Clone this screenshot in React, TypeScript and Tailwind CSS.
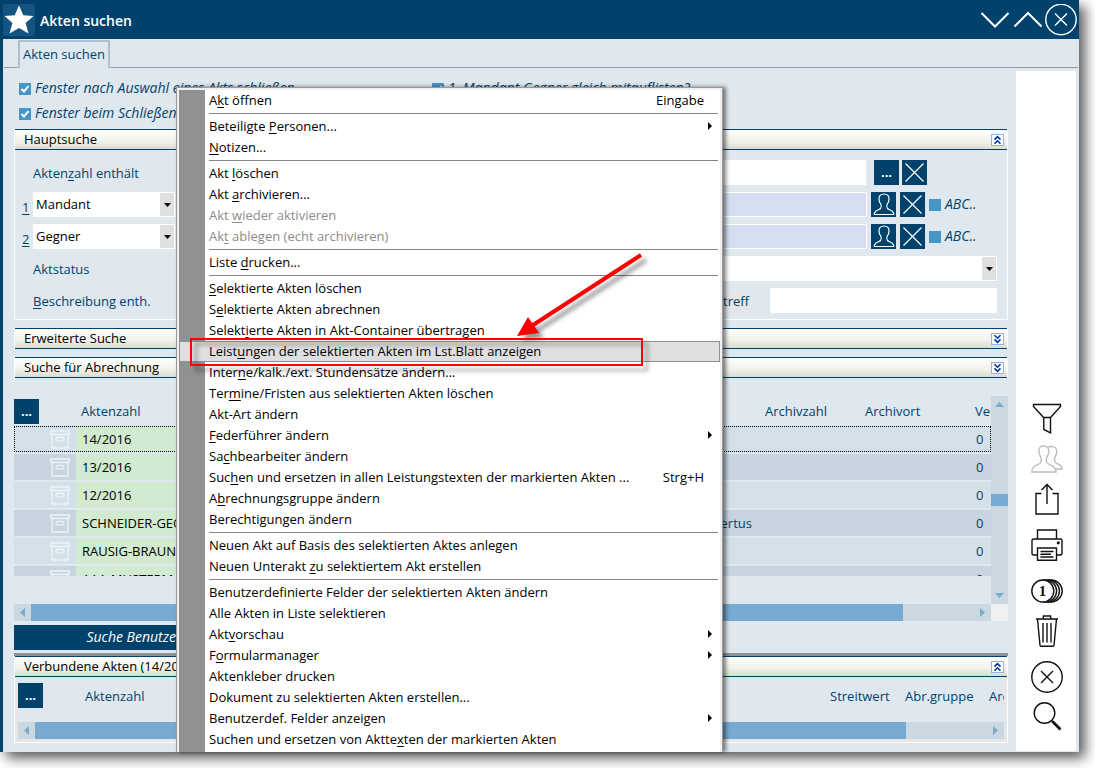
import { clsx } from "clsx";
import type { ReactNode } from "react";

type MenuEntry =
  | "-"
  | {
      label: string;
      /** index of the underlined access key */
      key?: number;
      shortcut?: string;
      sub?: boolean;
      disabled?: boolean;
      active?: boolean;
    };

const MENU: MenuEntry[] = [
  { label: "Akt öffnen", key: 1, shortcut: "Eingabe" },
  "-",
  { label: "Beteiligte Personen...", key: 11, sub: true },
  { label: "Notizen...", key: 0 },
  "-",
  { label: "Akt löschen", key: 4 },
  { label: "Akt archivieren...", key: 4 },
  { label: "Akt wieder aktivieren", key: 4, disabled: true },
  { label: "Akt ablegen (echt archivieren)", key: 2, disabled: true },
  "-",
  { label: "Liste drucken...", key: 6 },
  "-",
  { label: "Selektierte Akten löschen", key: 0 },
  { label: "Selektierte Akten abrechnen", key: 1 },
  { label: "Selektierte Akten in Akt-Container übertragen", key: 6 },
  {
    label: "Leistungen der selektierten Akten im Lst.Blatt anzeigen",
    key: 5,
    active: true,
  },
  { label: "Interne/kalk./ext. Stundensätze ändern...", key: 5 },
  { label: "Termine/Fristen aus selektierten Akten löschen", key: 3 },
  { label: "Akt-Art ändern" },
  { label: "Federführer ändern", key: 0, sub: true },
  { label: "Sachbearbeiter ändern", key: 2 },
  {
    label: "Suchen und ersetzen in allen Leistungstexten der markierten Akten ...",
    key: 3,
    shortcut: "Strg+H",
  },
  { label: "Abrechnungsgruppe ändern", key: 1 },
  { label: "Berechtigungen ändern", key: 8 },
  "-",
  { label: "Neuen Akt auf Basis des selektierten Aktes anlegen" },
  { label: "Neuen Unterakt zu selektiertem Akt erstellen", key: 15 },
  "-",
  { label: "Benutzerdefinierte Felder der selektierten Akten ändern" },
  { label: "Alle Akten in Liste selektieren" },
  { label: "Aktvorschau", key: 3, sub: true },
  { label: "Formularmanager", key: 1, sub: true },
  { label: "Aktenkleber drucken" },
  { label: "Dokument zu selektierten Akten erstellen..." },
  { label: "Benutzerdef. Felder anzeigen", sub: true },
  { label: "Suchen und ersetzen von Akttexten der markierten Akten", key: 29 },
];

const FILES = [
  { no: "14/2016", person: "", count: 0 },
  { no: "13/2016", person: "", count: 0 },
  { no: "12/2016", person: "", count: 0 },
  { no: "SCHNEIDER-GEORG", person: "Hubertus", count: 0 },
  { no: "RAUSIG-BRAUN-", person: "", count: 0 },
  { no: "AAA-MUSTERMANN", person: "", count: 0 },
];

function AccessKey({ text, at }: { text: string; at?: number }) {
  if (at === undefined) return <>{text}</>;
  return (
    <>
      {text.slice(0, at)}
      <span className="underline underline-offset-2">{text[at]}</span>
      {text.slice(at + 1)}
    </>
  );
}

function Check({
  id,
  label,
  checked,
}: {
  id: string;
  label: string;
  checked?: boolean;
}) {
  return (
    <div className="flex items-center">
      <span className="relative flex">
        <input
          id={id}
          type="checkbox"
          defaultChecked={checked}
          className="peer h-3 w-3 appearance-none bg-[#4596c6]"
        />
        <svg
          viewBox="0 0 12 12"
          className="pointer-events-none absolute inset-0 hidden h-3 w-3 peer-checked:block"
        >
          <path d="M2.5 6 L5 8.5 L9.5 3.2" fill="none" stroke="#fff" strokeWidth="2" />
        </svg>
      </span>
      <label htmlFor={id} className="pb-0.5 pl-1 text-[14px] leading-[18px] italic whitespace-nowrap">
        {label}
      </label>
    </div>
  );
}

function DarkButton({ label, children }: { label: string; children: ReactNode }) {
  return (
    <button
      type="button"
      aria-label={label}
      className="flex h-[25px] w-[25px] shrink-0 items-center justify-center bg-[#00426b] text-[13px] leading-none font-bold text-white"
    >
      {children}
    </button>
  );
}

function CrossIcon() {
  return (
    <svg viewBox="0 0 25 25" className="h-[25px] w-[25px]">
      <path d="M3.5 3.5 L21.5 21.5 M21.5 3.5 L3.5 21.5" stroke="#fff" strokeWidth="1.2" />
    </svg>
  );
}

function PersonIcon() {
  return (
    <svg viewBox="0 0 25 25" className="h-[25px] w-[25px]" fill="none" stroke="#fff" strokeWidth="1.2">
      <path d="M13 2 C9.5 2 7.8 4 8 7 C8 9.5 8.8 11 9.8 12.2 C10.6 13.5 10.2 15.5 9.5 16.5 C8 18.2 3.5 17.8 3.2 22.5 H22.8 C22.5 17.8 18 18.2 16.5 16.5 C15.8 15.5 15.4 13.5 16.2 12.2 C17.2 11 18 9.5 18 7 C18.2 4 16.5 2 13 2 Z" />
    </svg>
  );
}

function SelectBox({
  id,
  label,
  value,
  className,
}: {
  id: string;
  label: string;
  value: string;
  className: string;
}) {
  return (
    <div className={clsx("relative h-[25px]", className)}>
      <select
        id={id}
        aria-label={label}
        className="h-full w-full appearance-none bg-white pr-4 pb-0.5 pl-[3px] text-black"
      >
        <option>{value}</option>
      </select>
      <span className="pointer-events-none absolute top-px right-px bottom-px flex w-[14px] items-center justify-center bg-[#e0e0e0]">
        <svg viewBox="0 0 7 4" className="h-1 w-[7px]">
          <path d="M0 0 H7 L3.5 4 Z" fill="#000" />
        </svg>
      </span>
    </div>
  );
}

function SectionHeader({ title, open }: { title: string; open?: boolean }) {
  return (
    <div className="flex h-[21px] items-center justify-between border-y border-[#00426b] bg-linear-to-b from-white via-[#f1f2ea] via-60% to-[#dedbcd] pr-[3px] pl-[9px] text-black">
      <h2 className="pb-0.5">{title}</h2>
      <button
        type="button"
        aria-label={open ? "Einklappen" : "Ausklappen"}
        className="h-3 w-[13px] border border-[#a3add8] bg-white"
      >
        <svg viewBox="0 0 11 10" className={clsx("h-[10px] w-[11px]", !open && "rotate-180")}>
          <path
            d="M2.5 4.6 L5.5 1.6 L8.5 4.6 M2.5 8.8 L5.5 5.8 L8.5 8.8"
            fill="none"
            stroke="#0034a0"
            strokeWidth="1.6"
          />
        </svg>
      </button>
    </div>
  );
}

function HScroll({ thumb }: { thumb: string }) {
  return (
    <div className="flex h-[17px] flex-1 items-center bg-[#cbd8e2]">
      <svg viewBox="0 0 17 17" className="h-[17px] w-[17px]">
        <path d="M11 4 V13 L6 8.5 Z" fill="#78aad0" />
      </svg>
      <div className="h-full flex-1">
        <div className={clsx("h-full bg-[#78aad0]", thumb)} />
      </div>
      <svg viewBox="0 0 17 17" className="h-[17px] w-[17px]">
        <path d="M6 4 V13 L11 8.5 Z" fill="#78aad0" />
      </svg>
    </div>
  );
}

function ArchiveBox() {
  return (
    <svg viewBox="0 0 20 19" className="h-[19px] w-5" fill="none" stroke="#eef3f7" strokeWidth="1.3">
      <path d="M0.8 1 H19.2 V4.5 H0.8 Z M2 4.5 V18 H18 V4.5" />
      <rect x="6" y="7.5" width="8" height="3.4" rx="1.7" />
    </svg>
  );
}

function ToolButton({
  label,
  className,
  children,
}: {
  label: string;
  className?: string;
  children: ReactNode;
}) {
  return (
    <button type="button" aria-label={label} className={className}>
      <svg
        viewBox="0 0 32 32"
        className="h-8 w-8"
        fill="none"
        stroke="currentColor"
        strokeWidth="1.4"
      >
        {children}
      </svg>
    </button>
  );
}

function Sidebar() {
  return (
    <aside className="mt-[3px] mb-px flex w-[60px] shrink-0 flex-col items-center justify-end bg-white pb-[18px] pl-0.5 text-[#111]">
      <ToolButton label="Filter">
        <path d="M2.5 1.5 H29.5 V3.5 L19.5 14.5 H12.5 L2.5 3.5 Z M12.8 14.5 V26.5 L19.5 29.8 V14.5" />
      </ToolButton>
      <ToolButton label="Personen" className="mt-2 text-[#bdbdbd]">
        <path d="M12.5 3 C8.8 3 7.6 5.5 7.8 8.5 C8 11 8.8 12.5 9.8 14 C10.6 16 10.4 18 9.8 19.5 C8 22.5 0.8 21.5 0.8 29 H25 C25 22 17.5 22.5 15.8 19.5 C15 18 15 16 15.8 14 C17 12.5 17.8 11 17.8 8.5 C18 5.5 16.5 3 12.5 3 Z" />
        <path d="M17 4.5 C18 3.8 19 3.5 20.3 3.5 C24.5 3.5 26 6 25.8 9 C25.6 11 25 12.5 24 14 C23.2 16 23.4 17.5 24 19 C25.5 21.5 31.2 21 31.2 26 H25" />
      </ToolButton>
      <ToolButton label="Exportieren" className="mt-2">
        <path d="M10.5 10.5 H5 V31 H27 V10.5 H21.5 M16 21 V1.5 M10.5 7 L16 1.5 L21.5 7" />
      </ToolButton>
      <ToolButton label="Drucken" className="mt-3.5">
        <path d="M6.5 10 V1 H25.5 V10 M6.5 26 H2.5 Q1 26 1 24.5 V11.5 Q1 10 2.5 10 H29.5 Q31 10 31 11.5 V24.5 Q31 26 29.5 26 H25.5 M6.5 19 H25.5 V31.2 H6.5 Z M9.5 22.5 H22.5 M9.5 25.2 H20 M9.5 28 H22.5" />
        <circle cx="27.3" cy="13.8" r="0.9" fill="currentColor" />
      </ToolButton>
      <ToolButton label="Leistungen" className="mt-3.5">
        <g fill="#fff">
          <circle cx="20.2" cy="16" r="11" />
          <circle cx="17.4" cy="16" r="11" />
          <circle cx="14.6" cy="16" r="11" />
          <circle cx="11.8" cy="16" r="11" />
        </g>
        <text
          x="11.5"
          y="21"
          textAnchor="middle"
          fill="currentColor"
          stroke="none"
          className="font-['Liberation_Serif',serif] text-[15px] font-bold"
        >
          1
        </text>
      </ToolButton>
      <ToolButton label="Löschen" className="mt-2">
        <path d="M5 4 H27 M12 4 L12.5 1 H19.5 L20 4 M6.5 4 L9 30.2 Q9.1 31.2 10 31.2 H22 Q22.9 31.2 23 30.2 L25.5 4 M12 8 V27.5 M16 8 V27.5 M20 8 V27.5" />
      </ToolButton>
      <ToolButton label="Schließen" className="mt-3.5">
        <circle cx="16" cy="16" r="15.2" />
        <path d="M10 10 L22 22 M22 10 L10 22" />
      </ToolButton>
      <ToolButton label="Suchen" className="mt-2">
        <circle cx="13.5" cy="12" r="10.3" />
        <path d="M20.5 19.5 L22.5 21.5" />
        <path d="M21.5 20.5 L29.5 28.5" strokeWidth="2.8" />
      </ToolButton>
    </aside>
  );
}

function ContextMenu() {
  return (
    <div
      role="menu"
      className="absolute top-[87px] bottom-0 left-[173px] w-[547px] border border-b-0 border-[#999] bg-[#f0f0f0] px-0.5 pt-0.5 text-black shadow-[3px_0_4px_rgba(0,0,0,0.5)]"
    >
      <div className="h-full bg-linear-to-r from-[#919191] from-[26px] to-white to-[26px]">
        {MENU.map((entry, i) =>
          entry === "-" ? (
            <div key={i} role="separator" className="flex h-[5px] items-center pr-0.5 pl-[30px]">
              <div className="h-px w-full bg-[#858585]" />
            </div>
          ) : (
            <button
              key={i}
              type="button"
              role="menuitem"
              disabled={entry.disabled}
              className={clsx(
                "flex h-[21px] w-full items-center pr-2 pb-0.5 pl-[30px] text-left whitespace-nowrap",
                entry.disabled && "text-[#8c8c8c]",
                entry.active && "bg-[#dfdfdf] inset-ring inset-ring-[#8f8f8f]",
              )}
            >
              <span className="flex-1">
                <AccessKey text={entry.label} at={entry.key} />
              </span>
              {entry.shortcut && <span className="pr-2">{entry.shortcut}</span>}
              {entry.sub && (
                <svg viewBox="0 0 4 8" className="h-2 w-1">
                  <path d="M0 0 L4 4 L0 8 Z" fill="#000" />
                </svg>
              )}
            </button>
          ),
        )}
      </div>

      {/* Marker around the active entry and the arrow pointing at it */}
      <svg
        viewBox="0 0 480 130"
        className="pointer-events-none absolute top-[160px] left-[3px] h-[130px] w-[480px] [filter:drop-shadow(5px_5px_2px_rgba(0,0,0,0.4))]"
      >
        <rect x="11" y="91" width="451" height="26" fill="none" stroke="#f00" strokeWidth="2" />
        <path d="M461 7 L350 79" stroke="#f00" strokeWidth="4" />
        <path d="M337 88 L348 69 L359 85 Z" fill="#f00" />
      </svg>
    </div>
  );
}

function PartyRow({ no, role }: { no: number; role: string }) {
  return (
    <div className="flex items-center">
      <a href={`#partei${no}`} className="w-[11px] pt-1 underline underline-offset-2">
        {no}
      </a>
      <SelectBox id={`partei${no}`} label={`Partei ${no}`} value={role} className="w-[142px]" />
      <input
        aria-label={role}
        className="ml-2 h-[25px] min-w-0 flex-1 border border-white bg-[#d5ddf0]"
      />
      <div className="flex w-[140px] items-center gap-1 pl-1">
        <DarkButton label="Person wählen">
          <PersonIcon />
        </DarkButton>
        <DarkButton label="Leeren">
          <CrossIcon />
        </DarkButton>
        <Check id={`abc${no}`} label="ABC.." />
      </div>
    </div>
  );
}

export default function App() {
  return (
    <div className="overflow-hidden bg-white pr-4 pb-4 font-['Open_Sans',sans-serif] text-[13px] leading-[18px] text-[#00426b]">
      <div className="relative border-l-[3px] border-[#00426b] bg-[#e0e8ef] shadow-[6px_6px_12px_rgba(0,0,0,0.65)]">
        {/* Title bar */}
        <header className="flex h-[39px] items-center bg-[#00426b] pr-0.5 text-white">
          <svg viewBox="0 0 32 32" className="h-8 w-8">
            <rect width="32" height="32" rx="3" fill="#135582" />
            <path
              d="M16 1.5 L20.3 11.2 L30.5 12 L22.6 19 L25.5 29.5 L16 24 L6.5 29.5 L9.4 19 L1.5 12 L11.7 11.2 Z"
              fill="#fff"
            />
          </svg>
          <h1 className="flex-1 pt-0.5 pl-[5px] text-[14px] leading-[18px] font-semibold">
            Akten suchen
          </h1>
          <div className="flex items-center">
            <button type="button" aria-label="Minimieren">
              <svg viewBox="0 0 33 32" className="h-8 w-[33px]">
                <path d="M2.5 9 L16 22.5 L29.5 9" fill="none" stroke="#fff" strokeWidth="2" />
              </svg>
            </button>
            <button type="button" aria-label="Maximieren">
              <svg viewBox="0 0 33 32" className="h-8 w-[33px]">
                <path d="M2.5 22.5 L16 9 L29.5 22.5" fill="none" stroke="#fff" strokeWidth="2" />
              </svg>
            </button>
            <button type="button" aria-label="Schließen">
              <svg viewBox="0 0 32 32" className="h-8 w-8" fill="none" stroke="#fff">
                <circle cx="16" cy="15.5" r="15.2" strokeWidth="1.4" />
                <path d="M10 9.5 L22 21.5 M22 9.5 L10 21.5" strokeWidth="1.4" />
              </svg>
            </button>
          </div>
        </header>

        {/* Tabs */}
        <nav className="mr-px ml-px flex h-[29px] items-end border-b border-[#8f9ba6] pl-[14px]">
          <button
            type="button"
            className="-mb-px h-[28px] border-2 border-b-0 border-[#b0bfcc] bg-[#e0e8ef] px-[3px] pb-0.5 whitespace-nowrap"
          >
            Akten suchen
          </button>
        </nav>

        <div className="flex gap-2 pr-[3px] pl-[11px]">
          <main className="min-w-0 flex-1 pt-2 pb-[9px]">
            <div className="mb-[3px] grid grid-cols-[413px_1fr] pl-[5px]">
              <div className="flex h-[25px] items-center">
                <Check id="closeOnPick" label="Fenster nach Auswahl eines Akts schließen" checked />
              </div>
              <div className="flex h-[25px] items-center">
                <Check id="listOpponent" label="1. Mandant Gegner gleich mitauflisten?" checked />
              </div>
              <div className="flex h-[25px] items-center">
                <Check id="closeKeep" label="Fenster beim Schließen" checked />
              </div>
            </div>

            {/* Main search */}
            <section className="border-x border-b border-white">
              <SectionHeader title="Hauptsuche" open />
              <div className="flex flex-col gap-[7px] pt-[10px] pb-[6px] pl-[7px]">
                <div className="flex items-center pl-[11px]">
                  <label htmlFor="fileNo" className="w-[150px]">
                    <AccessKey text="Aktenzahl enthält" at={5} />
                  </label>
                  <input id="fileNo" className="h-[25px] min-w-0 flex-1 bg-white" />
                  <div className="flex w-[141px] items-center gap-[3px] pl-2">
                    <DarkButton label="Auswahl">...</DarkButton>
                    <DarkButton label="Leeren">
                      <CrossIcon />
                    </DarkButton>
                  </div>
                </div>
                <PartyRow no={1} role="Mandant" />
                <PartyRow no={2} role="Gegner" />
                <div className="flex items-center pr-[10px] pl-[11px]">
                  <label htmlFor="status" className="w-[150px]">
                    Aktstatus
                  </label>
                  <SelectBox id="status" label="Aktstatus" value="" className="min-w-0 flex-1" />
                </div>
                <div className="flex items-center pr-[10px] pl-[11px]">
                  <label htmlFor="descr" className="w-[150px]">
                    <AccessKey text="Beschreibung enth." at={0} />
                  </label>
                  <input id="descr" className="h-[25px] min-w-0 flex-1 bg-white" />
                  <label htmlFor="subject" className="mr-[21px] ml-4 bg-[#e6e6e6]">
                    Betreff
                  </label>
                  <input id="subject" className="h-[25px] w-[227px] bg-white" />
                </div>
              </div>
            </section>

            <section className="mt-2 border-x border-white">
              <SectionHeader title="Erweiterte Suche" />
            </section>
            <section className="mt-2 border-x border-white">
              <SectionHeader title="Suche für Abrechnung" />
            </section>

            {/* Result list */}
            <div className="mt-[18px] flex">
              <div className="min-w-0 flex-1 pb-7">
                <div className="h-[180px] overflow-hidden">
                  <table className="w-full table-fixed border-separate border-spacing-x-0 border-spacing-y-[2px] text-left">
                    <colgroup>
                      <col className="w-[62px]" />
                      <col className="w-[180px]" />
                      <col />
                      <col className="w-[100px]" />
                      <col className="w-[110px]" />
                      <col className="w-[21px]" />
                    </colgroup>
                    <thead>
                      <tr className="h-[26px]">
                        <th className="p-0">
                          <DarkButton label="Spalten">...</DarkButton>
                        </th>
                        <th className="p-0 pl-[5px] font-normal">Aktenzahl</th>
                        <th className="p-0" />
                        <th className="p-0 pl-[5px] font-normal">Archivzahl</th>
                        <th className="p-0 pl-[5px] font-normal">Archivort</th>
                        <th className="overflow-hidden p-0 pl-[5px] font-normal">Verst.</th>
                      </tr>
                    </thead>
                    <tbody>
                      {FILES.map((file, i) => (
                        <tr
                          key={file.no}
                          className={clsx(
                            "h-[26px]",
                            i % 2 ? "bg-[#c8d5e0]" : "bg-[#d4e0e9]",
                            i === 0 && "outline-1 -outline-offset-1 outline-black outline-dotted",
                          )}
                        >
                          <td className="p-0 pl-9">
                            <ArchiveBox />
                          </td>
                          <td className="bg-[#d1ead0] p-0 pl-[6px] whitespace-nowrap text-black">
                            {file.no}
                          </td>
                          <td className="p-0 pr-2 text-right">{file.person}</td>
                          <td className="p-0" />
                          <td className="p-0" />
                          <td className="p-0 pl-[6px]">{file.count}</td>
                        </tr>
                      ))}
                    </tbody>
                  </table>
                </div>
              </div>
              <div className="flex w-[17px] flex-col bg-[#cbd8e2]">
                <svg viewBox="0 0 17 17" className="h-[17px] w-[17px]">
                  <path d="M4 11 H13 L8.5 6 Z" fill="#78aad0" />
                </svg>
                <div className="flex flex-1 flex-col justify-center">
                  <div className="h-3 bg-[#78aad0]" />
                </div>
                <svg viewBox="0 0 17 17" className="h-[17px] w-[17px]">
                  <path d="M4 6 H13 L8.5 11 Z" fill="#78aad0" />
                </svg>
              </div>
            </div>
            <div className="flex">
              <HScroll thumb="w-[92.5%]" />
              <div className="h-[17px] w-[17px] bg-[#f0f0f0]" />
            </div>

            <button
              type="button"
              className="mt-1 flex h-[25px] w-[340px] items-center justify-center bg-[#00426b] pb-0.5 text-[14px] leading-[18px] text-white italic"
            >
              Suche Benutzerdefinierte Felder
            </button>

            {/* Linked files */}
            <section className="mt-[3px] border-t-[3px] border-t-[#8f9394]">
              <div className="border-x border-b border-white">
                <SectionHeader title="Verbundene Akten (14/2016)" open />
                <div className="border-3 border-[#e6e6e6] bg-[#e0e8ef]">
                  <table className="mt-[3px] mb-[14px] w-full table-fixed border-collapse text-left">
                    <colgroup>
                      <col className="w-[62px]" />
                      <col />
                      <col className="w-[75px]" />
                      <col className="w-[84px]" />
                      <col className="w-5" />
                    </colgroup>
                    <thead>
                      <tr>
                        <th className="p-0">
                          <DarkButton label="Spalten">...</DarkButton>
                        </th>
                        <th className="p-0 pl-[5px] font-normal">Aktenzahl</th>
                        <th className="p-0 pl-[5px] font-normal">Streitwert</th>
                        <th className="p-0 pl-[5px] font-normal">Abr.gruppe</th>
                        <th className="overflow-hidden p-0 pl-[5px] font-normal">Archivzahl</th>
                      </tr>
                    </thead>
                  </table>
                  <div className="flex">
                    <HScroll thumb="w-[91.5%]" />
                  </div>
                </div>
              </div>
            </section>
          </main>

          <Sidebar />
        </div>

        <ContextMenu />
      </div>
    </div>
  );
}
